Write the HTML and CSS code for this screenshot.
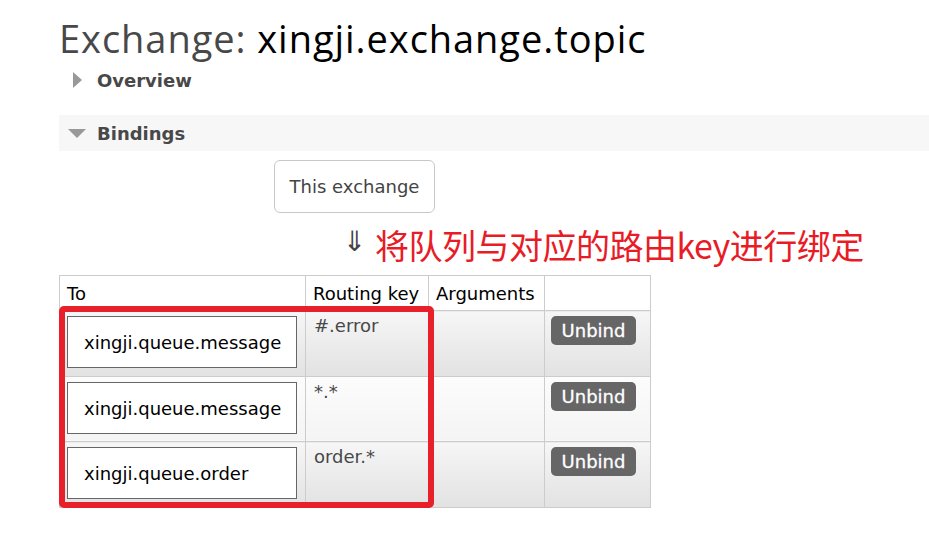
FILE: index.html
```html
<!DOCTYPE html>
<html>
<head>
<meta charset="utf-8">
<link rel="stylesheet" href="styles.css">
</head>
<body>
<div class="page">
  <h1 class="title"><span class="label">Exchange:</span> xingji.exchange.topic</h1>
  <div class="section closed">
    <span class="tri-right"></span>
    <span class="sec-name">Overview</span>
  </div>
  <div class="section open">
    <span class="tri-down"></span>
    <span class="sec-name">Bindings</span>
  </div>
  <div class="this-ex">This exchange</div>
  <div class="arrow-row">
    <span class="arrow">⇓</span>
    <span class="note">将队列与对应的路由key进行绑定</span>
  </div>
  <div class="table-wrap">
    <table class="bindings">
      <thead>
        <tr>
          <th class="c-to">To</th>
          <th class="c-key">Routing key</th>
          <th class="c-args">Arguments</th>
          <th class="c-act"></th>
        </tr>
      </thead>
      <tbody>
        <tr class="alt1">
          <td><div class="queue">xingji.queue.message</div></td>
          <td class="key">#.error</td>
          <td></td>
          <td class="act"><span class="btn">Unbind</span></td>
        </tr>
        <tr class="alt0">
          <td><div class="queue">xingji.queue.message</div></td>
          <td class="key">*.*</td>
          <td></td>
          <td class="act"><span class="btn">Unbind</span></td>
        </tr>
        <tr class="alt1">
          <td><div class="queue">xingji.queue.order</div></td>
          <td class="key">order.*</td>
          <td></td>
          <td class="act"><span class="btn">Unbind</span></td>
        </tr>
      </tbody>
    </table>
    <div class="highlight"></div>
  </div>
</div>
</body>
</html>
```
FILE: styles.css
```css
html, body {
  margin: 0;
  padding: 0;
  background: #fff;
}
body {
  font-family: "DejaVu Sans", Verdana, sans-serif;
  color: #484848;
}
.page {
  padding-left: 59px;
  padding-top: 16px;
}
.title {
  font-family: "Open Sans", "Noto Sans", sans-serif;
  font-weight: normal;
  font-size: 38px;
  line-height: 44px;
  margin: 0;
  color: #000;
  letter-spacing: 0.95px;
}
.title .label {
  color: #484848;
}
.section {
  display: flex;
  align-items: center;
  height: 36px;
}
.section.closed {
  height: 30px;
  margin-top: 5px;
  margin-bottom: 20px;
}
.section.open {
  background: #f7f7f7;
}
.tri-right {
  width: 0;
  height: 0;
  border-top: 8px solid transparent;
  border-bottom: 8px solid transparent;
  border-left: 9px solid #999;
  margin-left: 14px;
  margin-right: 15px;
}
.tri-down {
  width: 0;
  height: 0;
  border-left: 9px solid transparent;
  border-right: 9px solid transparent;
  border-top: 9px solid #999;
  margin-left: 9px;
  margin-right: 11px;
}
.sec-name {
  font-weight: bold;
  font-size: 18px;
  color: #484848;
}
.this-ex {
  margin-left: 215px;
  margin-top: 9px;
  width: 161px;
  height: 53px;
  border: 1px solid #c8c8c8;
  border-radius: 6px;
  box-sizing: border-box;
  display: flex;
  align-items: center;
  justify-content: center;
  font-size: 18px;
  color: #444;
}
.arrow-row {
  display: flex;
  align-items: center;
  margin-left: 284px;
  height: 62px;
}
.arrow {
  font-size: 28px;
  color: #444;
  margin-top: -6px;
  width: 32px;
}
.note {
  font-family: "Noto Sans CJK SC", sans-serif;
  font-size: 34px;
  color: #e81c26;
  letter-spacing: -0.5px;
}
.table-wrap {
  position: relative;
  width: 592px;
}
.bindings {
  border-collapse: collapse;
  border: 1px solid #ccc;
  font-size: 18px;
  color: #000;
}
.bindings th {
  font-weight: normal;
  text-align: left;
  height: 34px;
  padding: 0 6px 0 7px;
  border: 1px solid #ccc;
  vertical-align: middle;
  color: #000;
}
.c-to { width: 232px; }
.c-key { width: 109px; }
.c-args { width: 102px; }
.c-act { width: 92px; }
.bindings td {
  border: 1px solid #ccc;
  padding: 5px 8px;
  vertical-align: top;
  height: 54.6px;
}
.alt1 td {
  background: linear-gradient(#f6f6f6, #e2e2e2);
}
.alt0 td {
  background: linear-gradient(#fcfcfc, #f4f4f4);
}
.queue {
  width: 230px;
  height: 52px;
  box-sizing: border-box;
  border: 1px solid #666;
  background: #fff;
  padding-left: 16px;
  padding-top: 15px;
  font-size: 18px;
  color: #000;
  margin-left: -1px;
}
.bindings td.key {
  font-size: 18px;
  color: #484848;
  padding-top: 4px;
}
.bindings td.act {
  padding-left: 6px;
}
.btn {
  display: inline-block;
  background: #666;
  color: #fff;
  border-radius: 5px;
  width: 85px;
  height: 29px;
  line-height: 29px;
  text-align: center;
  font-size: 18px;
  -webkit-text-stroke: 0.3px #fff;
}
.highlight {
  position: absolute;
  left: 0;
  top: 31px;
  width: 375px;
  height: 202px;
  box-sizing: border-box;
  border: 6px solid #e8202a;
  border-radius: 5px;
  pointer-events: none;
}
```
